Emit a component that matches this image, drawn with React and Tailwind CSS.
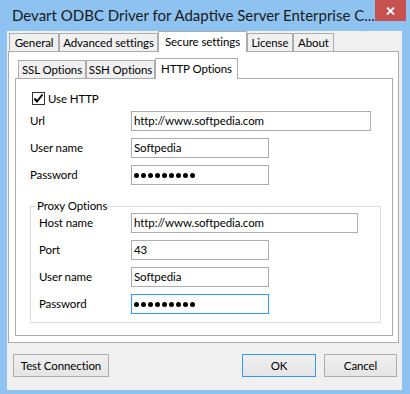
import React from 'react';

const mainTabs = [
  { label: 'General', w: 'w-[50px]' },
  { label: 'Advanced settings', w: 'w-[99px]' },
  { label: 'Secure settings', w: 'w-[89px]', active: true },
  { label: 'License', w: 'w-[46px]' },
  { label: 'About', w: 'w-[41px]' },
];

const subTabs = [
  { label: 'SSL Options', w: 'w-[68px]' },
  { label: 'SSH Options', w: 'w-[69px]' },
  { label: 'HTTP Options', w: 'w-[83px]', active: true },
];

function Tab({ label, w, active }) {
  if (active) {
    return (
      <div className={`${w} h-[21px] -mb-px relative z-10 bg-white border border-b-0 border-[#acacac] flex items-center justify-center whitespace-nowrap`}>
        {label}
      </div>
    );
  }
  return (
    <div className={`${w} h-[18px] mt-[2px] bg-[#f0f0f0] border border-b-0 border-[#acacac] flex items-center justify-center whitespace-nowrap`}>
      {label}
    </div>
  );
}

function Dots() {
  return (
    <div className="flex items-center gap-[2px]">
      {[0, 1, 2, 3, 4, 5, 6, 7, 8].map(i => (
        <div key={i} className="w-[5px] h-[5px] rounded-full bg-black" />
      ))}
    </div>
  );
}

function Field({ w, children, focused }) {
  return (
    <div className={`${w} h-[20px] border ${focused ? 'border-[#3399ff]' : 'border-[#abadb3]'} bg-white flex items-center pl-[2px]`}>
      {children}
    </div>
  );
}

function Row({ label, labelW, children }) {
  return (
    <div className="flex items-center h-[20px]">
      <div className={`${labelW} shrink-0`}>{label}</div>
      {children}
    </div>
  );
}

export default function App() {
  return (
    <div className="w-[410px] h-[394px] bg-[#8ec3f1] flex flex-col font-['Lato',sans-serif] text-[11.5px] tracking-[-0.1px] text-black overflow-hidden">
      {/* title bar */}
      <div className="h-[31px] flex items-start shrink-0">
        <div className="ml-[12px] mt-[5px] text-[15px] tracking-normal leading-[20px] text-[#1a1a1a] whitespace-nowrap">
          Devart ODBC Driver for Adaptive Server Enterprise C...
        </div>
        <div className="ml-auto mr-[7px] w-[31px] h-[21px] bg-[#c75050] flex items-center justify-center shrink-0">
          <svg width="9" height="8" viewBox="0 0 9 8">
            <path d="M1 0.5 L8 7.5 M8 0.5 L1 7.5" stroke="#fff" strokeWidth="1.8" />
          </svg>
        </div>
      </div>

      {/* client area */}
      <div className="ml-[7px] mr-[8px] h-[359px] bg-[#f0f0f0] flex flex-col shrink-0">
        <div className="flex h-[20px] ml-[2px]">
          {mainTabs.map(t => <Tab key={t.label} {...t} />)}
        </div>

        <div className="ml-[1px] w-[391px] h-[292px] bg-white border border-[#acacac] pt-[6px] pl-[6px]">
          <div className="flex h-[20px] ml-[3px]">
            {subTabs.map(t => <Tab key={t.label} {...t} />)}
          </div>

          <div className="w-[378px] h-[258px] bg-white border border-[#acacac] pt-[13px]">
            <label className="flex items-center h-[13px] ml-[16px] mb-[6px]">
              <div className="w-[13px] h-[13px] border border-[#333] bg-white flex items-center justify-center">
                <svg width="11" height="11" viewBox="0 0 11 11">
                  <path d="M1.5 5.5 L4 8.5 L9.5 1.5" stroke="#000" strokeWidth="2" fill="none" />
                </svg>
              </div>
              <span className="ml-[3px]">Use HTTP</span>
            </label>

            <div className="flex flex-col gap-[7px] pl-[14px]">
              <Row label="Url" labelW="w-[101px]">
                <Field w="w-[240px]">http://www.softpedia.com</Field>
              </Row>
              <Row label="User name" labelW="w-[101px]">
                <Field w="w-[138px]">Softpedia</Field>
              </Row>
              <Row label="Password" labelW="w-[101px]">
                <Field w="w-[138px]"><Dots /></Field>
              </Row>
            </div>

            <fieldset className="ml-[14px] mt-[14px] w-[351px] border border-[#dcdcdc] p-0">
              <legend className="ml-[5px] px-[1px] leading-[14px]">Proxy Options</legend>
              <div className="flex flex-col gap-[7px] pl-[8px] pb-[8px]">
                <Row label="Host name" labelW="w-[92px]">
                  <Field w="w-[227px]">http://www.softpedia.com</Field>
                </Row>
                <Row label="Port" labelW="w-[92px]">
                  <Field w="w-[138px]">43</Field>
                </Row>
                <Row label="User name" labelW="w-[92px]">
                  <Field w="w-[138px]">Softpedia</Field>
                </Row>
                <Row label="Password" labelW="w-[92px]">
                  <Field w="w-[138px]" focused><Dots /></Field>
                </Row>
              </div>
            </fieldset>
          </div>
        </div>

        {/* buttons */}
        <div className="flex mt-[11px] h-[23px]">
          <button className="ml-[6px] w-[96px] h-[23px] border border-[#acacac] bg-gradient-to-b from-[#f0f0f0] to-[#e5e5e5]">
            Test Connection
          </button>
          <button className="ml-auto w-[74px] h-[23px] border border-[#3399ff] bg-gradient-to-b from-[#f0f0f0] to-[#e5e5e5]">
            OK
          </button>
          <button className="ml-[8px] mr-[5px] w-[73px] h-[23px] border border-[#acacac] bg-gradient-to-b from-[#f0f0f0] to-[#e5e5e5]">
            Cancel
          </button>
        </div>
      </div>
    </div>
  );
}
